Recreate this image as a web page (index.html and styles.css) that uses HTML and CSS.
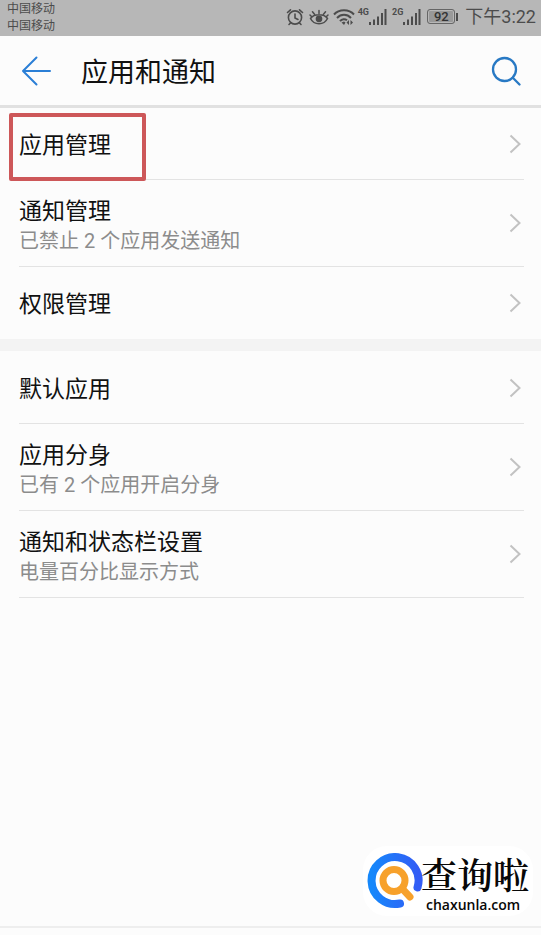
FILE: index.html
```html
<!DOCTYPE html>
<html lang="zh-CN">
<head>
<meta charset="utf-8">
<meta name="viewport" content="width=device-width, initial-scale=1">
<title>应用和通知</title>
<link rel="stylesheet" href="styles.css">
</head>
<body>
<div class="status">
  <div class="carriers"><span>中国移动</span><span>中国移动</span></div>
  <div class="indicators">
    <svg width="18" height="18" viewBox="0 0 18 18" fill="none" stroke="currentColor" stroke-width="1.6" stroke-linecap="round"><circle cx="9" cy="9.500" r="6.600"/><path d="M9 6v4l3 1.500M1.500 4.500 4.500 1.800M16.500 4.500 13.500 1.800M4.500 15l-1.500 1.500M13.500 15l1.500 1.500"/></svg>
    <svg class="eye" width="20" height="18" viewBox="0 0 20 18" fill="none" stroke="currentColor" stroke-width="1.500" stroke-linecap="round"><path d="M1.500 10.500C5 5.500 15 5.500 18.500 10.500 15 17.500 5 17.500 1.500 10.500zM10 5.500V2.500M5.500 6.200 3.500 3.800M14.500 6.200l2-2.400M2.500 8.500 1 7M17.500 8.500 19 7"/><circle cx="10" cy="10.800" r="2.600" fill="currentColor"/></svg>
    <svg class="wifi" width="22" height="18" viewBox="0 0 22 18" fill="none" stroke="currentColor" stroke-width="2"><path d="M1 6.500C6 .9 16 .9 21 6.500M4 10C8 5.800 14 5.800 18 10M7 13.200c2-2.400 5-2.600 7-.9"/><path d="M8.500 14.500 11 17l1.500-2.500-1.500-1z" fill="currentColor" stroke="none"/><path d="m16 12-2.500 2.500L16 17zM17.500 12l2.500 2.500-2.500 2.500z" fill="currentColor" stroke="none"/></svg>
    <span class="net">4G</span>
    <svg width="18" height="18" viewBox="0 0 18 18" fill="currentColor"><path d="M0 14h2v3H0zM4 11.500h2V17H4zM8 8.500h2V17H8zM12 5h2v12h-2zM15.500 1h2v16h-2z"/></svg>
    <span class="net second">2G</span>
    <svg width="18" height="18" viewBox="0 0 18 18" fill="currentColor"><path d="M0 14h2v3H0zM4 11.500h2V17H4zM8 8.500h2V17H8zM12 5h2v12h-2zM15.500 1h2v16h-2z"/></svg>
    <span class="battery">92</span><span class="nub"></span>
    <time class="clock">下午3:22</time>
  </div>
</div>
<header class="header">
  <button class="icon-button" type="button" aria-label="返回"><svg width="30" height="30" viewBox="0 0 30 30" fill="none" stroke="#2b7fd6" stroke-width="2" stroke-linecap="round" stroke-linejoin="round"><path d="M29 15H2M15.500 1.500 2 15l13.500 13.500"/></svg></button>
  <h1>应用和通知</h1>
  <button class="icon-button" type="button" aria-label="搜索"><svg width="30" height="30" viewBox="0 0 30 30" fill="none" stroke="#2879c4" stroke-width="2.300" stroke-linecap="round"><circle cx="13.500" cy="13.500" r="11.500"/><path d="m21.800 21.800 6.700 6.700"/></svg></button>
</header>
<main>
  <nav class="group">
    <a class="row marked" href="#"><span class="title">应用管理</span><svg class="chevron" viewBox="0 0 12 20"><path d="m1.500 1.500 9 8.500-9 8.500"/></svg></a>
    <a class="row tall" href="#"><span><span class="title">通知管理</span><span class="sub">已禁止 2 个应用发送通知</span></span><svg class="chevron" viewBox="0 0 12 20"><path d="m1.500 1.500 9 8.500-9 8.500"/></svg></a>
    <a class="row last" href="#"><span class="title">权限管理</span><svg class="chevron" viewBox="0 0 12 20"><path d="m1.500 1.500 9 8.500-9 8.500"/></svg></a>
  </nav>
  <nav class="group next">
    <a class="row" href="#"><span class="title">默认应用</span><svg class="chevron" viewBox="0 0 12 20"><path d="m1.500 1.500 9 8.500-9 8.500"/></svg></a>
    <a class="row tall" href="#"><span><span class="title">应用分身</span><span class="sub">已有 2 个应用开启分身</span></span><svg class="chevron" viewBox="0 0 12 20"><path d="m1.500 1.500 9 8.500-9 8.500"/></svg></a>
    <a class="row tall" href="#"><span><span class="title">通知和状态栏设置</span><span class="sub">电量百分比显示方式</span></span><svg class="chevron" viewBox="0 0 12 20"><path d="m1.500 1.500 9 8.500-9 8.500"/></svg></a>
  </nav>
</main>
<div class="brand">
  <svg width="56" height="56" viewBox="0 0 56 56" fill="none" stroke-linecap="round"><defs><linearGradient id="blue" x1="0" y1="0" x2="1" y2="0"><stop offset="0" stop-color="#1688fb"/><stop offset="1" stop-color="#335cf5"/></linearGradient></defs><path d="M33 50.500A23.500 23.500 0 1 1 50.500 34.500" stroke="url(#blue)" stroke-width="8"/><circle cx="27" cy="27.500" r="11" stroke="#f7a12b" stroke-width="7"/><path d="m36 36.500 7 7.500" stroke="#f7a12b" stroke-width="7"/></svg>
  <div class="brand-text"><span class="brand-name">查询啦</span><span class="brand-url">chaxunla.com</span></div>
</div>
<footer class="bottom"></footer>
</body>
</html>
```
FILE: styles.css
```css
*, *::before { box-sizing: border-box; }
body {
  margin: 0;
  min-height: 100vh;
  display: flex;
  flex-direction: column;
  position: relative;
  background: #fcfcfc;
  color: #111;
  font-family: Roboto, "Noto Sans CJK SC", sans-serif;
}
.status {
  height: 36px;
  display: flex;
  justify-content: space-between;
  padding: 0 5px 0 7px;
  background: #b7b7b7;
  color: #4c4c4c;
}
.carriers { display: flex; flex-direction: column; padding-top: 1px; font-size: 12px; line-height: 17px; }
.indicators { display: flex; align-items: center; height: 33px; }
.eye { margin-left: 5px; }
.wifi { margin-left: 4px; }
.net { align-self: flex-start; margin: 6px 0 0 3px; font: bold 9px/12px "Roboto", sans-serif; }
.second { margin-left: 5px; }
.battery {
  margin-left: 6px;
  width: 28px;
  height: 15px;
  border: 1px solid #666;
  border-radius: 3px;
  background: #999;
  box-shadow: inset 0 0 0 1px #b7b7b7;
  color: #333;
  font-size: 13px;
  font-weight: 500;
  line-height: 13px;
  text-align: center;
}
.nub { width: 2px; height: 8px; margin-left: 1px; background: #4c4c4c; }
.clock { margin-left: 7px; font-size: 18px; line-height: 32px; }
.header {
  height: 72px;
  display: flex;
  align-items: center;
  padding: 0 20px 0 21px;
  border-bottom: 3px solid #e1e1e1;
}
.header h1 { flex: 1; margin: 0 0 0 30px; padding-top: 4px; font-size: 27px; line-height: 40px; font-weight: 400; }
.icon-button { padding: 0; border: 0; background: none; display: flex; }
.group { padding: 0 17px 0 19px; }
.next { padding-top: 1px; border-top: 12px solid #f3f3f3; }
.row {
  min-height: 72px;
  display: flex;
  align-items: center;
  justify-content: space-between;
  border-bottom: 1px solid #e3e3e3;
  color: inherit;
  text-decoration: none;
  position: relative;
}
.tall { min-height: 87px; }
.last { border-bottom: 0; }
.marked::before {
  content: "";
  position: absolute;
  left: -10px;
  top: 5px;
  width: 137px;
  height: 68px;
  border: 4px solid #cd5759;
  border-radius: 2px;
}
.title { display: block; padding-top: 4px; font-size: 23px; line-height: 32px; }
.sub { display: block; font-size: 20px; line-height: 26px; color: #8c8c8c; }
.chevron { width: 12px; height: 20px; margin-right: 3px; fill: none; stroke: #c2c2c2; stroke-width: 2; }
.brand {
  position: absolute;
  right: 8px;
  bottom: 19px;
  display: flex;
  align-items: center;
  padding: 4px;
  background: #fff;
  border-radius: 24px;
  color: #080808;
}
.brand-text { display: flex; flex-direction: column; margin-left: -2px; }
.brand-name { font: 600 36px/48px "Noto Serif CJK SC", "Noto Sans CJK SC", serif; }
.brand-url { margin-left: 5px; font: 600 14px/14px "Open Sans", sans-serif; }
.bottom { height: 9px; margin-top: auto; border-top: 2px solid #eee; }
```
